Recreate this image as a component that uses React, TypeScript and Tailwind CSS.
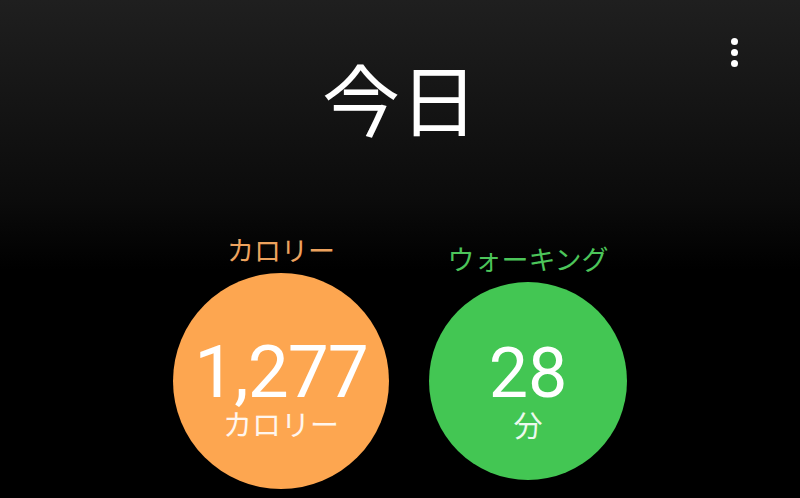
import React from 'react';

const jp = '[font-family:"Noto_Sans_CJK_JP","Noto_Sans",sans-serif]';

interface StatCircleProps {
  label: string;
  value: string;
  unit: string;
  size: 'lg' | 'md';
  tone: 'orange' | 'green';
}

const StatCircle: React.FC<StatCircleProps> = ({ label, value, unit, size, tone }) => {
  const isOrange = tone === 'orange';
  return (
    <div className="flex flex-col items-center">
      <span
        className={`${jp} text-[27px] leading-none ${isOrange ? 'text-[#eda25e]' : 'text-[#4cc55a]'}`}
      >
        {label}
      </span>
      <div
        className={`mt-[10px] flex flex-col items-center rounded-full ${
          size === 'lg' ? 'size-[216px] pt-[67px]' : 'size-[198px] pt-[60px]'
        } ${isOrange ? 'bg-[#fda650]' : 'bg-[#43c653]'}`}
      >
        <span
          className={`font-['Roboto',sans-serif] text-white ${
            isOrange ? 'text-[73px] leading-[64px] tracking-[-1px]' : 'text-[70px] leading-[62px]'
          }`}
        >
          {value}
        </span>
        <span
          className={`${jp} text-[29px] leading-none text-white/90 ${isOrange ? 'mt-[5px]' : 'mt-[6px]'}`}
        >
          {unit}
        </span>
      </div>
    </div>
  );
};

export default function App() {
  return (
    <div className="relative h-[498px] w-[800px] overflow-hidden bg-[linear-gradient(to_bottom,#1f1f1f_0px,#0b0b0b_200px,#000_270px)]">
      <button className="absolute right-[60px] top-[36px] flex flex-col items-center gap-[4px] p-[2px]">
        <span className="size-[7px] rounded-full bg-white" />
        <span className="size-[7px] rounded-full bg-white" />
        <span className="size-[7px] rounded-full bg-white" />
      </button>

      <h1 className={`${jp} pt-[58px] text-center text-[78px] font-normal leading-none text-white`}>
        今日
      </h1>

      <div className="mt-[100px] flex items-center justify-center gap-[40px]">
        <StatCircle label="カロリー" value="1,277" unit="カロリー" size="lg" tone="orange" />
        <StatCircle label="ウォーキング" value="28" unit="分" size="md" tone="green" />
      </div>
    </div>
  );
}
